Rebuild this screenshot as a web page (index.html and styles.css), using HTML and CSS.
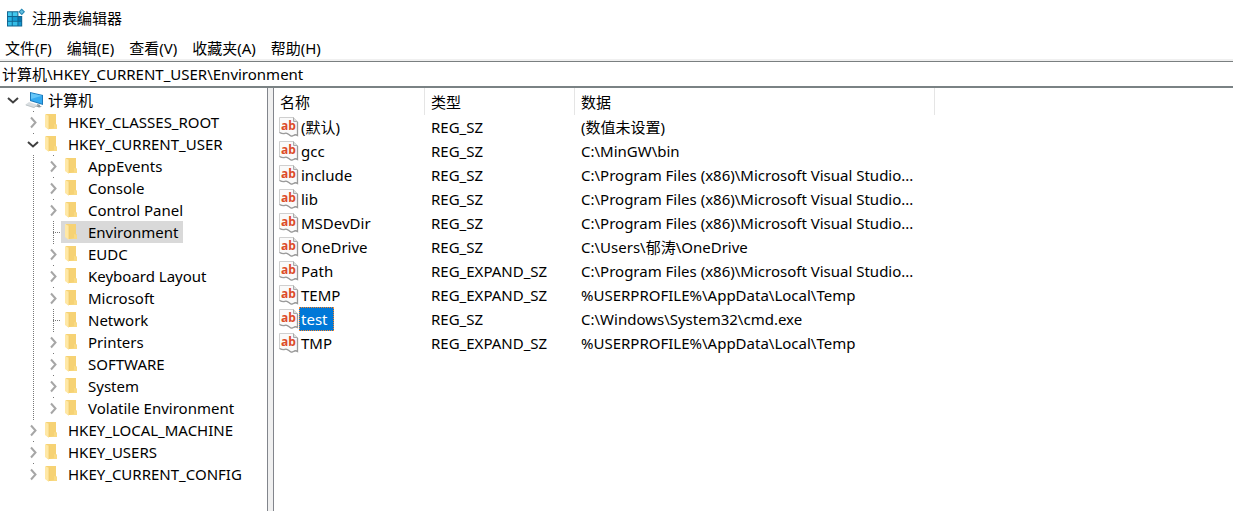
FILE: index.html
```
<!DOCTYPE html>
<html lang="zh-CN">
<head>
<meta charset="utf-8">
<meta name="viewport" content="width=device-width, initial-scale=1">
<title>注册表编辑器</title>
<link rel="stylesheet" href="styles.css">
</head>
<body>
<svg class="sprite" aria-hidden="true">
  <symbol id="folder" viewBox="0 0 13 16">
    <path d="M1 0h10v10l1 1v4H3L1 13z" fill="#f6d274"/>
    <path d="M9 10l3 1v4H5l4-1z" fill="#f9da83"/>
    <path d="M0 0l4 2v14l-4-3z" fill="#ffe8a6"/>
    <path d="M4 2v13" stroke="#efc866" stroke-width=".7"/>
  </symbol>
  <symbol id="right" viewBox="0 0 16 18">
    <path d="M6 4.500l4.500 5-4.500 5" fill="none" stroke="#a6a6a6" stroke-width="2"/>
  </symbol>
  <symbol id="down" viewBox="0 0 16 18">
    <path d="M3 7l5 4.500L13 7" fill="none" stroke="#404040" stroke-width="2"/>
  </symbol>
  <symbol id="paper" viewBox="0 0 20 20">
    <path d="M.500.500h14l4 4v14q-2-1.500-4 0-2 1.500-4-.500-3-2.500-5-1.500-2 .500-5-1z" fill="#fafafa" stroke="#cfcfcf"/>
    <path d="M14.500.500v4h4" fill="#ddd" stroke="#aaa"/>
    <path d="M18.500 5v13.500q-2-1.500-4 0-2 1.500-4-.500-3-2.500-5-1.500-2 .500-5-1" fill="none" stroke="#9a9a9a" stroke-width="1.300"/>
  </symbol>
</svg>
<header class="titlebar">
  <svg class="app-icon" viewBox="0 0 20 20" aria-hidden="true">
    <path d="M0 3h12v5h4v11H0z" fill="#11648f"/>
    <path d="M1 4h4v4H1zM6 4h5v4H6z" fill="#42c8ee"/>
    <path d="M1 9h4v4H1z" fill="#27b3e4"/>
    <path d="M6 9h5v4H6z" fill="#159bd2"/>
    <path d="M12 9h3v4h-3z" fill="#0879b4"/>
    <path d="M1 14h4v4H1zM6 14h5v4H6z" fill="#35bee8"/>
    <path d="M12 14h3v4h-3z" fill="#1596cf"/>
    <path d="M15.500 0L19 3.500 15.500 7 12 3.500z" fill="#2588b5"/>
    <path d="M15.500 1.500l2 2-2 2-2-2z" fill="#66bfdf"/>
  </svg>
  <h1 class="title">注册表编辑器</h1>
</header>
<nav class="menubar" aria-label="菜单">
  <button class="menu-item" type="button">文件(F)</button>
  <button class="menu-item" type="button">编辑(E)</button>
  <button class="menu-item" type="button">查看(V)</button>
  <button class="menu-item" type="button">收藏夹(A)</button>
  <button class="menu-item" type="button">帮助(H)</button>
</nav>
<input class="address" type="text" aria-label="地址" value="计算机\HKEY_CURRENT_USER\Environment">
<main class="panes">
  <nav class="tree" aria-label="注册表项">
    <div class="node root">
      <button class="toggle" type="button" aria-label="折叠 计算机"><svg><use href="#down"/></svg></button>
      <span class="label">
        <svg class="computer" viewBox="0 0 19 16" aria-hidden="true">
          <path d="M5 0l13 3v10L5 9z" fill="#1c79ba"/>
          <path d="M6 1.200l11 2.600v8L6 8.200z" fill="#35aaf0"/>
          <path d="M6 1.200l11 2.600L6 7z" fill="#65c6f8"/>
          <path d="M12 12l3 .8v1.200l2 .8-3 .8-4-1.500 2-.6z" fill="#8d999f"/>
          <path d="M0 13l4-3 9 3-4 3z" fill="#d8dde0"/>
          <path d="M1 13l8 2.500 3-2" fill="none" stroke="#b1b9bd" stroke-width=".7"/>
        </svg>
        <span class="text">计算机</span>
      </span>
    </div>
    <ul class="branch">
      <li><div class="node"><button class="toggle" type="button" aria-label="展开 HKEY_CLASSES_ROOT"><svg><use href="#right"/></svg></button><span class="label"><svg class="folder"><use href="#folder"/></svg><span class="text">HKEY_CLASSES_ROOT</span></span></div></li>
      <li><div class="node"><button class="toggle" type="button" aria-label="折叠 HKEY_CURRENT_USER"><svg><use href="#down"/></svg></button><span class="label"><svg class="folder"><use href="#folder"/></svg><span class="text">HKEY_CURRENT_USER</span></span></div>
        <ul class="branch">
          <li><div class="node"><button class="toggle" type="button" aria-label="展开 AppEvents"><svg><use href="#right"/></svg></button><span class="label"><svg class="folder"><use href="#folder"/></svg><span class="text">AppEvents</span></span></div></li>
          <li><div class="node"><button class="toggle" type="button" aria-label="展开 Console"><svg><use href="#right"/></svg></button><span class="label"><svg class="folder"><use href="#folder"/></svg><span class="text">Console</span></span></div></li>
          <li><div class="node"><button class="toggle" type="button" aria-label="展开 Control Panel"><svg><use href="#right"/></svg></button><span class="label"><svg class="folder"><use href="#folder"/></svg><span class="text">Control Panel</span></span></div></li>
          <li><div class="node"><span class="leaf"></span><span class="label current"><svg class="folder"><use href="#folder"/></svg><span class="text">Environment</span></span></div></li>
          <li><div class="node"><button class="toggle" type="button" aria-label="展开 EUDC"><svg><use href="#right"/></svg></button><span class="label"><svg class="folder"><use href="#folder"/></svg><span class="text">EUDC</span></span></div></li>
          <li><div class="node"><button class="toggle" type="button" aria-label="展开 Keyboard Layout"><svg><use href="#right"/></svg></button><span class="label"><svg class="folder"><use href="#folder"/></svg><span class="text">Keyboard Layout</span></span></div></li>
          <li><div class="node"><button class="toggle" type="button" aria-label="展开 Microsoft"><svg><use href="#right"/></svg></button><span class="label"><svg class="folder"><use href="#folder"/></svg><span class="text">Microsoft</span></span></div></li>
          <li><div class="node"><span class="leaf"></span><span class="label"><svg class="folder"><use href="#folder"/></svg><span class="text">Network</span></span></div></li>
          <li><div class="node"><button class="toggle" type="button" aria-label="展开 Printers"><svg><use href="#right"/></svg></button><span class="label"><svg class="folder"><use href="#folder"/></svg><span class="text">Printers</span></span></div></li>
          <li><div class="node"><button class="toggle" type="button" aria-label="展开 SOFTWARE"><svg><use href="#right"/></svg></button><span class="label"><svg class="folder"><use href="#folder"/></svg><span class="text">SOFTWARE</span></span></div></li>
          <li><div class="node"><button class="toggle" type="button" aria-label="展开 System"><svg><use href="#right"/></svg></button><span class="label"><svg class="folder"><use href="#folder"/></svg><span class="text">System</span></span></div></li>
          <li><div class="node"><button class="toggle" type="button" aria-label="展开 Volatile Environment"><svg><use href="#right"/></svg></button><span class="label"><svg class="folder"><use href="#folder"/></svg><span class="text">Volatile Environment</span></span></div></li>
        </ul>
      </li>
      <li><div class="node"><button class="toggle" type="button" aria-label="展开 HKEY_LOCAL_MACHINE"><svg><use href="#right"/></svg></button><span class="label"><svg class="folder"><use href="#folder"/></svg><span class="text">HKEY_LOCAL_MACHINE</span></span></div></li>
      <li><div class="node"><button class="toggle" type="button" aria-label="展开 HKEY_USERS"><svg><use href="#right"/></svg></button><span class="label"><svg class="folder"><use href="#folder"/></svg><span class="text">HKEY_USERS</span></span></div></li>
      <li><div class="node"><button class="toggle" type="button" aria-label="展开 HKEY_CURRENT_CONFIG"><svg><use href="#right"/></svg></button><span class="label"><svg class="folder"><use href="#folder"/></svg><span class="text">HKEY_CURRENT_CONFIG</span></span></div></li>
    </ul>
  </nav>
  <div class="splitter"></div>
  <section class="values">
    <table class="list">
      <colgroup><col class="col-name"><col class="col-type"><col class="col-data"></colgroup>
      <thead><tr><th>名称</th><th>类型</th><th>数据</th></tr></thead>
      <tbody>
        <tr><td><div class="name"><svg class="string" aria-hidden="true"><use href="#paper"/><text class="glyph" x="2" y="13">ab</text></svg><span class="value">(默认)</span></div></td><td>REG_SZ</td><td>(数值未设置)</td></tr>
        <tr><td><div class="name"><svg class="string" aria-hidden="true"><use href="#paper"/><text class="glyph" x="2" y="13">ab</text></svg><span class="value">gcc</span></div></td><td>REG_SZ</td><td>C:\MinGW\bin</td></tr>
        <tr><td><div class="name"><svg class="string" aria-hidden="true"><use href="#paper"/><text class="glyph" x="2" y="13">ab</text></svg><span class="value">include</span></div></td><td>REG_SZ</td><td>C:\Program Files (x86)\Microsoft Visual Studio...</td></tr>
        <tr><td><div class="name"><svg class="string" aria-hidden="true"><use href="#paper"/><text class="glyph" x="2" y="13">ab</text></svg><span class="value">lib</span></div></td><td>REG_SZ</td><td>C:\Program Files (x86)\Microsoft Visual Studio...</td></tr>
        <tr><td><div class="name"><svg class="string" aria-hidden="true"><use href="#paper"/><text class="glyph" x="2" y="13">ab</text></svg><span class="value">MSDevDir</span></div></td><td>REG_SZ</td><td>C:\Program Files (x86)\Microsoft Visual Studio...</td></tr>
        <tr><td><div class="name"><svg class="string" aria-hidden="true"><use href="#paper"/><text class="glyph" x="2" y="13">ab</text></svg><span class="value">OneDrive</span></div></td><td>REG_SZ</td><td>C:\Users\郁涛\OneDrive</td></tr>
        <tr><td><div class="name"><svg class="string" aria-hidden="true"><use href="#paper"/><text class="glyph" x="2" y="13">ab</text></svg><span class="value">Path</span></div></td><td>REG_EXPAND_SZ</td><td>C:\Program Files (x86)\Microsoft Visual Studio...</td></tr>
        <tr><td><div class="name"><svg class="string" aria-hidden="true"><use href="#paper"/><text class="glyph" x="2" y="13">ab</text></svg><span class="value">TEMP</span></div></td><td>REG_EXPAND_SZ</td><td>%USERPROFILE%\AppData\Local\Temp</td></tr>
        <tr><td><div class="name"><svg class="string" aria-hidden="true"><use href="#paper"/><text class="glyph" x="2" y="13">ab</text></svg><span class="value selected">test</span></div></td><td>REG_SZ</td><td>C:\Windows\System32\cmd.exe</td></tr>
        <tr><td><div class="name"><svg class="string" aria-hidden="true"><use href="#paper"/><text class="glyph" x="2" y="13">ab</text></svg><span class="value">TMP</span></div></td><td>REG_EXPAND_SZ</td><td>%USERPROFILE%\AppData\Local\Temp</td></tr>
      </tbody>
    </table>
  </section>
</main>
</body>
</html>
```
FILE: styles.css
```
* { box-sizing: border-box; }

body {
  margin: 0;
  min-height: 100vh;
  display: flex;
  flex-direction: column;
  background: #fff;
  color: #000;
  font: 15px/22px "Noto Sans", "Noto Sans CJK SC", sans-serif;
}

button, input { font: inherit; color: inherit; }
svg { display: block; flex: none; }
.sprite { display: none; }

.titlebar {
  display: flex;
  align-items: center;
  gap: 6px;
  height: 35px;
  padding-left: 7px;
}
.app-icon { width: 19px; height: 20px; }
.title { margin: 0; font-size: 15px; font-weight: 400; }

.menubar {
  display: flex;
  gap: 15px;
  height: 26px;
  padding: 2px 5px 0;
  border-bottom: 2px solid #f0f0f0;
}
.menu-item { padding: 0; border: 0; background: none; line-height: 20px; }

.address {
  width: 100%;
  height: 27px;
  padding: 0 2px 2px;
  border: 0;
  border-top: 1px solid #7a7f80;
  border-bottom: 2px solid #7a8284;
  border-radius: 0;
  background: #fff;
  outline: 0;
}

.panes { flex: 1; display: flex; }

.tree { flex: none; width: 267px; padding: 1px 0 0 5px; white-space: nowrap; }
.branch { margin: 0; padding: 0 0 0 20px; list-style: none; }
.branch > li {
  background: repeating-linear-gradient(#777 0 1px, transparent 1px 2px) 8px 0 / 1px 100% no-repeat;
}
.branch > li:last-child { background-size: 1px 11px; }
.node { display: flex; align-items: center; height: 22px; }
.toggle { width: 16px; height: 20px; padding: 0; border: 0; background: #fff; }
.toggle svg { width: 16px; height: 18px; }
.leaf {
  width: 16px;
  height: 1px;
  background: repeating-linear-gradient(90deg, #777 0 1px, transparent 1px 2px) 8px 0 / 8px 1px no-repeat;
}
.label { display: flex; align-items: center; height: 22px; padding: 0 4px; }
.current { background: #d9d9d9; }
.folder { width: 13px; height: 16px; margin-right: 10px; }
.computer { width: 19px; height: 16px; margin-right: 4px; }

.splitter {
  flex: none;
  width: 7px;
  background: #f0f0f0;
  border: solid #82858c;
  border-width: 0 1px;
}

.values { flex: 1; min-width: 0; }
.list { table-layout: fixed; width: 661px; border-collapse: separate; border-spacing: 0; white-space: nowrap; }
.col-name { width: 151px; }
.col-type { width: 150px; }
.col-data { width: 360px; }
.list th {
  height: 27px;
  padding: 0 6px;
  border-right: 1px solid #e5e5e5;
  font-weight: 400;
  text-align: left;
}
.list td { height: 24px; padding: 0 6px; overflow: hidden; }
.list td:first-child { padding: 0 0 0 5px; }
.name { display: flex; align-items: center; }
.string { width: 20px; height: 20px; }
.glyph { font: 700 12px "Open Sans", sans-serif; fill: #dc4b28; }
.value { height: 24px; padding: 0 6px 0 1px; border: 1px solid transparent; }
.selected { background: #0078d7; border: 1px dotted #ff8728; color: #fff; }
```
